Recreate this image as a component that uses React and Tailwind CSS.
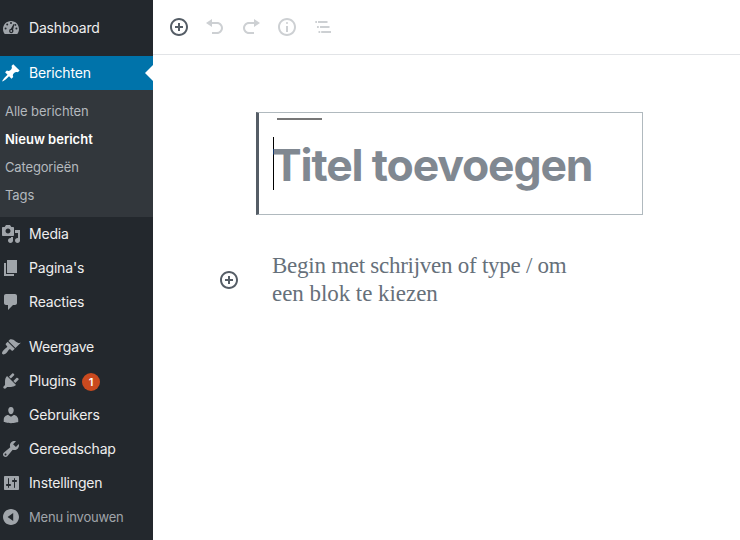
const PATHS = {
  dashboard:
    "M3.76 16h12.48c1.1-1.37 1.76-3.11 1.76-5 0-4.42-3.58-8-8-8s-8 3.58-8 8c0 1.89.66 3.63 1.76 5zM10 4a1 1 0 1 1 0 2 1 1 0 0 1 0-2zM6.2 5.5a1 1 0 1 1 0 2 1 1 0 0 1 0-2zM12.6 5.9l.8.4-1.3 5.4c.3.4.4.9.4 1.3a2.2 2.2 0 1 1-2.6-2.2zM4.6 9.5a1 1 0 1 1 0 2 1 1 0 0 1 0-2zM15.4 9.5a1 1 0 1 1 0 2 1 1 0 0 1 0-2zM14.4 6a.9.9 0 1 1 0 1.8.9.9 0 0 1 0-1.8zM10.2 12.1a.9.9 0 1 0 0 1.8.9.9 0 0 0 0-1.8z",
  post: "M10.44 3.02l1.82-1.82 6.36 6.35-1.83 1.82c-1.05-.68-2.48-.57-3.41.36l-.75.75c-.92.93-1.04 2.35-.35 3.41l-1.83 1.82-2.41-2.41-2.8 2.79c-.42.42-3.38 2.71-3.8 2.29s1.86-3.39 2.28-3.81l2.79-2.79L4.1 9.36l1.83-1.82c1.05.69 2.48.57 3.4-.36l.75-.75c.93-.92 1.05-2.35.36-3.41z",
  media:
    "M13 11V4c0-.55-.45-1-1-1h-1.67L9 1H5L3.67 3H2c-.55 0-1 .45-1 1v7c0 .55.45 1 1 1h10c.55 0 1-.45 1-1zM7 4.5c1.38 0 2.5 1.12 2.5 2.5S8.38 9.5 7 9.5 4.5 8.38 4.5 7 5.62 4.5 7 4.5zM14 6h5v10.5c0 1.38-1.12 2.5-2.5 2.5S14 17.88 14 16.5s1.12-2.5 2.5-2.5c.17 0 .34.02.5.05V9h-3V6zm-4 8.05V13h2v3.5c0 1.38-1.12 2.5-2.5 2.5S7 17.88 7 16.5 8.12 14 9.5 14c.17 0 .34.02.5.05z",
  page: "M6 15V2h10v13H6zm-1 1h8v2H3V5h2v11z",
  comments:
    "M5 2h9c1.1 0 2 .9 2 2v7c0 1.1-.9 2-2 2h-2l-5 5v-5H5c-1.1 0-2-.9-2-2V4c0-1.1.9-2 2-2z",
  appearance:
    "M14.48 11.06L7.41 3.99l1.5-1.5c.5-.56 2.3-.47 3.51.32 1.21.8 1.43 1.28 2.91 2.1 1.18.64 2.45 1.26 4.45.85zm-.71.71L6.7 4.7 4.93 6.47c-.39.39-.39 1.02 0 1.41l1.06 1.06c.39.39.39 1.03 0 1.42-.6.6-1.43 1.11-2.21 1.69-.35.26-.7.53-1.01.84C1.43 14.23.4 16.08 1.4 17.07c.99 1 2.84-.03 4.18-1.36.31-.31.58-.66.85-1.02.57-.78 1.08-1.61 1.69-2.21.39-.39 1.02-.39 1.41 0l1.06 1.06c.39.39 1.02.39 1.41 0z",
  plugins:
    "M13.11 4.36L9.87 7.6 8 5.73l3.24-3.24c.35-.34 1.05-.2 1.56.32.52.51.66 1.21.31 1.55zm-8 1.77l.91-1.12 9.01 9.01-1.19.84c-.71.71-2.63 1.16-3.82 1.16H6.14L4.9 17.26c-.59.59-1.54.59-2.12 0-.59-.58-.59-1.53 0-2.12l1.24-1.24v-3.88c0-1.13.4-3.19 1.09-3.89zm7.26 3.97l3.24-3.24c.34-.35 1.04-.21 1.55.31.52.51.66 1.21.31 1.55l-3.24 3.25z",
  users:
    "M10 9.25c-2.27 0-2.73-3.44-2.73-3.44C7 4.02 7.82 2 9.97 2c2.16 0 2.98 2.02 2.71 3.81 0 0-.41 3.44-2.68 3.44zm0 2.57L12.72 10c2.39 0 4.52 2.33 4.52 4.53v2.49s-3.65 1.13-7.24 1.13c-3.65 0-7.24-1.13-7.24-1.13v-2.49c0-2.25 1.94-4.48 4.47-4.48z",
  tools:
    "M16.68 9.77c-1.34 1.34-3.3 1.67-4.95.99l-5.41 6.52c-.99.99-2.59.99-3.58 0s-.99-2.59 0-3.57l6.52-5.42c-.68-1.65-.35-3.61.99-4.95 1.28-1.28 3.12-1.62 4.72-1.06l-2.89 2.89 2.82 2.82 2.86-2.87c.53 1.58.18 3.39-1.08 4.65zM3.81 16.21c.4.39 1.04.39 1.43 0 .4-.4.4-1.04 0-1.43-.39-.4-1.03-.4-1.43 0-.39.39-.39 1.03 0 1.43z",
  settings:
    "M18 16V4c0-.55-.45-1-1-1H4c-.55 0-1 .45-1 1v12c0 .55.45 1 1 1h13c.55 0 1-.45 1-1zM8 11h1c.55 0 1 .45 1 1s-.45 1-1 1H8v1.5c0 .28-.22.5-.5.5s-.5-.22-.5-.5V13H6c-.55 0-1-.45-1-1s.45-1 1-1h1V5.5c0-.28.22-.5.5-.5s.5.22.5.5V11zm5-2h-1c-.55 0-1-.45-1-1s.45-1 1-1h1V5.5c0-.28.22-.5.5-.5s.5.22.5.5V7h1c.55 0 1 .45 1 1s-.45 1-1 1h-1v5.5c0 .28-.22.5-.5.5s-.5-.22-.5-.5V9z",
  collapse:
    "M10 2c4.42 0 8 3.58 8 8s-3.58 8-8 8-8-3.58-8-8 3.58-8 8-8zM12.2 14V6L6.6 10z",
  insert:
    "M10 1c-5 0-9 4-9 9s4 9 9 9 9-4 9-9-4-9-9-9zm0 16c-3.9 0-7-3.1-7-7s3.1-7 7-7 7 3.1 7 7-3.1 7-7 7zm1-11H9v3H6v2h3v3h2v-3h3V9h-3V6z",
  undo: "M12 5H7V2L1 6l6 4V7h5c2.2 0 4 1.8 4 4s-1.8 4-4 4H7v2h5c3.3 0 6-2.7 6-6s-2.7-6-6-6z",
  redo: "M8 5h5V2l6 4-6 4V7H8c-2.2 0-4 1.8-4 4s1.8 4 4 4h5v2H8c-3.3 0-6-2.7-6-6s2.7-6 6-6z",
  info: "M9 15h2V9H9v6zm1-10c-.5 0-1 .5-1 1s.5 1 1 1 1-.5 1-1-.5-1-1-1zm0-4c-5 0-9 4-9 9s4 9 9 9 9-4 9-9-4-9-9-9zm0 16c-3.9 0-7-3.1-7-7s3.1-7 7-7 7 3.1 7 7-3.1 7-7 7z",
  outline:
    "M2.3 4h1.7v2H2.3zM5 4h9.5v2H5zM4 9h1.8v2H4zM7 9h9.5v2H7zM5.5 14h1.7v2H5.5zM8.2 14H18v2H8.2z",
};

function Icon({ name, className = "" }) {
  return (
    <svg viewBox="0 0 20 20" className={`size-5 shrink-0 fill-current ${className}`}>
      <path fillRule="evenodd" d={PATHS[name]} />
    </svg>
  );
}

function MenuItem({ icon, label, badge }) {
  return (
    <li className="flex h-[34px] items-center pl-px">
      <Icon name={icon} className="text-[#a0a5aa]" />
      <span className="ml-2 text-[#eee]">{label}</span>
      {badge && (
        <span className="ml-1.5 mt-0.5 flex size-[18px] items-center justify-center rounded-full bg-[#ca4a1f] text-[11px] font-semibold text-white">
          {badge}
        </span>
      )}
    </li>
  );
}

function Sidebar() {
  return (
    <nav className="h-full w-[153px] shrink-0 bg-[#23282d] pt-[11px] text-[14px] leading-[18px] tracking-[-0.17px]">
      <ul>
        <MenuItem icon="dashboard" label="Dashboard" />
      </ul>
      <div className="relative mt-[11px] flex h-[34px] items-center bg-[#0073aa] pl-px text-white">
        <Icon name="post" />
        <span className="ml-2">Berichten</span>
        <span className="absolute right-0 top-[9px] border-y-8 border-r-8 border-y-transparent border-r-white" />
      </div>
      <ul className="h-[127px] bg-[#32373c] pl-[5px] pt-[7px] text-[13px] leading-7 tracking-[-0.08px] text-[#b4b9be]">
        <li>Alle berichten</li>
        <li className="font-semibold tracking-normal text-white">Nieuw bericht</li>
        <li className="tracking-[-0.15px]">Categorieën</li>
        <li>Tags</li>
      </ul>
      <ul>
        <MenuItem icon="media" label="Media" />
        <MenuItem icon="page" label="Pagina's" />
        <MenuItem icon="comments" label="Reacties" />
      </ul>
      <ul className="mt-[11px]">
        <MenuItem icon="appearance" label="Weergave" />
        <MenuItem icon="plugins" label="Plugins" badge="1" />
        <MenuItem icon="users" label="Gebruikers" />
        <MenuItem icon="tools" label="Gereedschap" />
        <MenuItem icon="settings" label="Instellingen" />
      </ul>
      <div className="flex h-[34px] items-center pl-px text-[13px] tracking-[-0.2px] text-[#a0a5aa]">
        <Icon name="collapse" />
        <span className="ml-2">Menu invouwen</span>
      </div>
    </nav>
  );
}

export default function App() {
  return (
    <div className="flex h-[540px] w-[740px] overflow-hidden bg-white font-[Inter,sans-serif]">
      <Sidebar />
      <main className="min-w-0 flex-1">
        <header className="flex h-[55px] items-center gap-4 border-b border-[#e2e4e7] pl-4 text-[#cdd0d3]">
          <Icon name="insert" className="text-[#555d66]" />
          <Icon name="undo" />
          <Icon name="redo" />
          <Icon name="info" />
          <Icon name="outline" />
        </header>
        <section className="relative ml-[103px] mt-[57px] h-[103px] w-[387px] border border-l-[3px] border-[#b0b9be] border-l-[#555d66] pl-[14px] pt-[24px]">
          <span className="absolute left-[18px] top-[5px] h-0.5 w-[45px] bg-[#777]" />
          <h1 className="h-[53px] w-max border-l border-black pt-0.5 text-[44.5px] font-bold leading-[53px] tracking-[-1.15px] whitespace-nowrap text-[#808891]">
            <span className="-ml-0.5">Titel toevoegen</span>
          </h1>
        </section>
        <section className="mt-[37px] flex items-start pl-[66px]">
          <Icon name="insert" className="mt-[18px] text-[#555d66]" />
          <p className="ml-[33px] font-['Liberation_Serif',serif] text-[23px] leading-7 tracking-[-0.26px] whitespace-nowrap text-[#66707a]">
            Begin met schrijven of type / om
            <br />
            <span className="tracking-[-0.05px]">een blok te kiezen</span>
          </p>
        </section>
      </main>
    </div>
  );
}
